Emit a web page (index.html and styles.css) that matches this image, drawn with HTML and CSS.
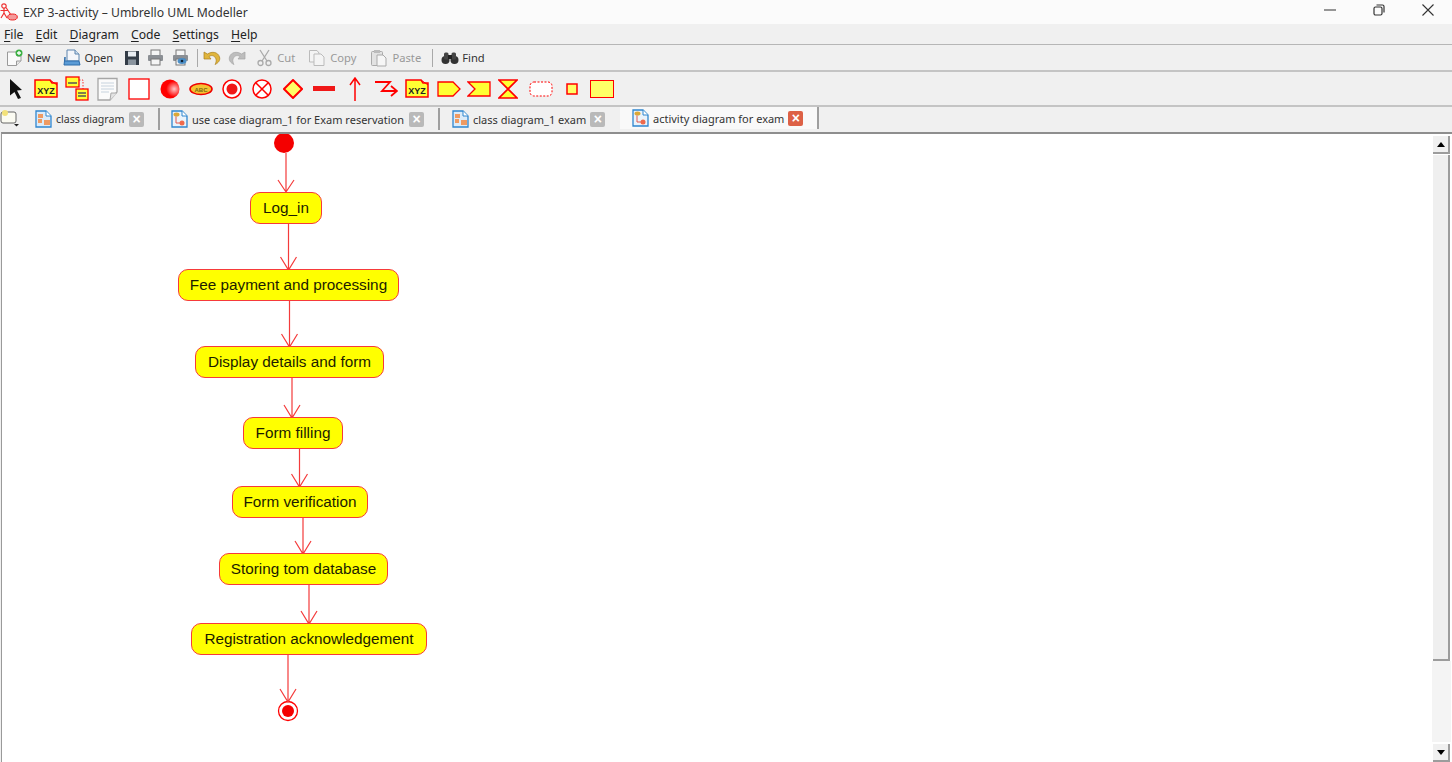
FILE: index.html
```html
<!DOCTYPE html>
<html lang="en">
<head>
<meta charset="utf-8">
<title>EXP 3-activity – Umbrello UML Modeller</title>
<link rel="stylesheet" href="styles.css">
</head>
<body>
<svg width="0" height="0" class="defs">
  <defs>
    <symbol id="doc" viewBox="0 0 17 18">
      <path d="M1 1H11L16 6V17H1Z" fill="#dcebf8" stroke="#2f86cf" stroke-width="1.300"/>
      <path d="M11 1V6H16" fill="#fff" stroke="#2f86cf"/>
      <rect x="3" y="4" width="5" height="4" fill="#ee9a62"/>
      <rect x="3" y="9" width="4" height="4" fill="#ee9a62"/>
      <rect x="9" y="10" width="6" height="5" fill="#ee9a62"/>
    </symbol>
    <symbol id="doc2" viewBox="0 0 17 18">
      <path d="M1 1H11L16 6V17H1Z" fill="#eaf3fb" stroke="#2f86cf" stroke-width="1.300"/>
      <path d="M11 1V6H16" fill="#fff" stroke="#2f86cf"/>
      <ellipse cx="5.500" cy="4.500" rx="3" ry="2" fill="#dba838"/>
      <path d="M5 6.500V13H10" fill="none" stroke="#e0564c" stroke-width="1"/>
      <circle cx="11" cy="13" r="2.500" fill="#ef6a4c"/>
    </symbol>
    <symbol id="xyz" viewBox="0 0 24 20">
      <path d="M1 1H16L18 4H23V18H1Z" fill="#ffff33" stroke="#f00" stroke-width="1.500"/>
      <path d="M16 1L23 6" fill="none" stroke="#f00" stroke-width="1"/>
    </symbol>
  </defs>
</svg>

<header class="titlebar">
  <div class="title-left">
    <svg class="app-icon" width="18" height="18" viewBox="0 0 18 18">
      <circle cx="4" cy="3" r="2.200" fill="none" stroke="#e33" stroke-width="1.200"/>
      <path d="M4 5V10M.5 7.500H8M4 10L1 15M4 10L7 15M6 4.500L11 12" fill="none" stroke="#e33" stroke-width="1.200"/>
      <ellipse cx="12.500" cy="14" rx="4.800" ry="3" fill="#f49a9a" stroke="#e22"/>
    </svg>
    <span>EXP 3-activity – Umbrello UML Modeller</span>
  </div>
  <div class="win-controls">
    <svg width="14" height="14" viewBox="0 0 14 14"><path d="M1 7H13" stroke="#444" stroke-width="1.100"/></svg>
    <svg width="14" height="14" viewBox="0 0 14 14"><rect x="2" y="4" width="8" height="8" rx="1.500" fill="none" stroke="#333" stroke-width="1.200"/><path d="M4.500 2H10.500A1.500 1.500 0 0 1 12 3.500V9.500" fill="none" stroke="#333" stroke-width="1.200"/></svg>
    <svg width="14" height="14" viewBox="0 0 14 14"><path d="M1.500 1.500L12.500 12.500M12.500 1.500L1.500 12.500" stroke="#333" stroke-width="1.100"/></svg>
  </div>
</header>

<nav class="menubar">
  <span><u>F</u>ile</span><span><u>E</u>dit</span><span><u>D</u>iagram</span><span><u>C</u>ode</span><span><u>S</u>ettings</span><span><u>H</u>elp</span>
</nav>

<div class="toolbar main-tools">
  <span class="tool t-new"><svg width="18" height="18" viewBox="0 0 18 18"><path d="M1.500 3H11V7H15V12L10.500 16.500H1.500Z" fill="#fafafa" stroke="#9a9a9a"/><path d="M10.500 16.500V12H15" fill="#e6e6e6" stroke="#9a9a9a"/><circle cx="13" cy="4" r="3.500" fill="#3cb043"/><path d="M11 4H15M13 2V6" stroke="#fff" stroke-width="1.300"/></svg>New</span>
  <span class="tool t-open"><svg width="18" height="18" viewBox="0 0 18 18"><path d="M4 1H12L16 5V12H4Z" fill="#f4f6fa" stroke="#5d84ad"/><path d="M12 1V5H16" fill="#cfdff0" stroke="#5d84ad"/><path d="M2 8V12H16L17 16H1Z" fill="#5a9bd6" stroke="#2c6cab"/></svg>Open</span>
  <span class="tool t-save"><svg width="16" height="16" viewBox="0 0 16 16"><path d="M1 1H15V15H1Z" fill="#333c47"/><rect x="4" y="1.500" width="8" height="5" fill="#e8edf2"/><rect x="4" y="9.500" width="8" height="5.500" fill="#8a949e"/></svg></span>
  <span class="tool t-print"><svg width="17" height="17" viewBox="0 0 17 17"><rect x="4" y="1" width="9" height="6" fill="#f5f5f5" stroke="#777"/><rect x="1" y="6" width="15" height="6" rx="1" fill="#8b8f94"/><rect x="4" y="10" width="9" height="6" fill="#f5f5f5" stroke="#777"/></svg></span>
  <span class="tool t-preview"><svg width="18" height="17" viewBox="0 0 18 17"><rect x="4" y="1" width="9" height="6" fill="#f5f5f5" stroke="#777"/><rect x="1" y="6" width="15" height="6" rx="1" fill="#8b8f94"/><rect x="4" y="10" width="9" height="6" fill="#f5f5f5" stroke="#777"/><ellipse cx="10" cy="12" rx="4.500" ry="3" fill="#4b8ec6"/><circle cx="10" cy="12" r="1.300" fill="#123"/></svg></span>
  <i class="sep"></i>
  <span class="tool t-undo"><svg width="18" height="16" viewBox="0 0 18 16"><path d="M1 2V9H8L6 6.500C9 4.500 12 6 13 9C13.500 11 13 13 12 14.500C15.500 13 17.500 10 16.500 7C15 2 9 1 4.500 4Z" fill="#e0b53c" stroke="#a97f1e" stroke-width=".7"/></svg></span>
  <span class="tool t-redo"><svg width="18" height="16" viewBox="0 0 18 16"><path d="M17 2V9H10L12 6.500C9 4.500 6 6 5 9C4.500 11 5 13 6 14.500C2.500 13 .5 10 1.500 7C3 2 9 1 13.500 4Z" fill="#bdbdbd" stroke="#a5a5a5" stroke-width=".7"/></svg></span>
  <span class="tool off t-cut"><svg width="17" height="18" viewBox="0 0 17 18"><path d="M4 1L11 12M13 1L6 12" stroke="#aaa" stroke-width="1.300"/><circle cx="4.500" cy="14" r="2.500" fill="none" stroke="#aaa" stroke-width="1.300"/><circle cx="12.500" cy="14" r="2.500" fill="none" stroke="#aaa" stroke-width="1.300"/></svg>Cut</span>
  <span class="tool off t-copy"><svg width="18" height="18" viewBox="0 0 18 18"><path d="M1.500 1.500H9L11 4V13H1.500Z" fill="#f4f4f4" stroke="#bbb"/><path d="M6 5H13L16 8V16.500H6Z" fill="#f4f4f4" stroke="#bbb"/></svg>Copy</span>
  <span class="tool off t-paste"><svg width="18" height="18" viewBox="0 0 18 18"><rect x="1.500" y="2.500" width="11" height="14" rx="1" fill="#e2e2e2" stroke="#aaa"/><rect x="4" y="1" width="6" height="3" fill="#bbb"/><path d="M7 6H13L16 9V17H7Z" fill="#f6f6f6" stroke="#aaa"/></svg>Paste</span>
  <i class="sep"></i>
  <span class="tool t-find"><svg width="18" height="14" viewBox="0 0 18 14"><circle cx="4.500" cy="9" r="4" fill="#333"/><circle cx="13.500" cy="9" r="4" fill="#333"/><rect x="3" y="1.500" width="4.500" height="7" rx="1.500" fill="#444"/><rect x="10.500" y="1.500" width="4.500" height="7" rx="1.500" fill="#444"/><rect x="7" y="4" width="4" height="4" fill="#222"/></svg>Find</span>
</div>

<div class="toolbar shape-tools">
  <svg class="m0" width="16" height="22" viewBox="0 0 16 22"><path d="M2 1L14 12L9 12.500L13 20L10 21L6.500 14L2 17.500Z" fill="#111"/></svg>
  <svg class="m10" width="24" height="20" viewBox="0 0 24 20"><use href="#xyz"/><text x="12" y="15" class="xyz">XYZ</text></svg>
  <svg class="m7" width="24" height="25" viewBox="0 0 24 25"><rect x="1" y="1" width="13" height="10" fill="#ffff33" stroke="#f00" stroke-width="1.300"/><rect x="11" y="13" width="12" height="11" fill="#ffff33" stroke="#f00" stroke-width="1.300"/><path d="M14 4H18V13" fill="none" stroke="#f00" stroke-dasharray="1.500 1.500" stroke-width=".8"/><path d="M3 7H12M13 17H21M13 20H21" stroke="#555" stroke-width="1.500"/></svg>
  <svg class="m8" width="21" height="24" viewBox="0 0 21 24"><path d="M1 1.500H20V15L13 23H1Z" fill="#fbfbfb" stroke="#a6a6a6" stroke-width="1.300"/><path d="M4 6H17M4 9H17M4 12H17M4 15H12" stroke="#c7d3de"/><path d="M13 23L14 16H20" fill="#e3e3e3" stroke="#aaa"/></svg>
  <svg class="m10" width="22" height="22" viewBox="0 0 22 22"><rect x="1" y="1" width="20" height="20" fill="#fff" stroke="#f00" stroke-width="1.300"/></svg>
  <svg class="m10" width="20" height="20" viewBox="0 0 20 20"><defs><radialGradient id="rb" cx=".72" cy=".5" r=".7"><stop offset="0" stop-color="#ffc8c8"/><stop offset=".6" stop-color="#f00"/></radialGradient></defs><circle cx="10" cy="10" r="9.500" fill="url(#rb)"/></svg>
  <svg class="m9" width="24" height="14" viewBox="0 0 24 14"><ellipse cx="12" cy="7" rx="11" ry="5.500" fill="#f5c232" stroke="#e00" stroke-width="1.600"/><text x="12" y="9.500" class="abc">ABC</text></svg>
  <svg class="m9" width="20" height="20" viewBox="0 0 20 20"><circle cx="10" cy="10" r="9" fill="#fff" stroke="#f00" stroke-width="1.500"/><circle cx="10" cy="10" r="5.500" fill="#f01818"/></svg>
  <svg class="m10" width="20" height="20" viewBox="0 0 20 20"><circle cx="10" cy="10" r="9" fill="#fff" stroke="#f00" stroke-width="1.500"/><path d="M4 4L16 16M16 4L4 16" stroke="#f00" stroke-width="1.500"/></svg>
  <svg class="m11" width="20" height="20" viewBox="0 0 20 20"><path d="M10 1L19 10L10 19L1 10Z" fill="#ffff66" stroke="#f00" stroke-width="2"/></svg>
  <svg class="m10" width="22" height="8" viewBox="0 0 22 8"><rect x="0" y="1" width="22" height="5" fill="#f01818"/></svg>
  <svg class="m14" width="12" height="24" viewBox="0 0 12 24"><path d="M6 24V2M1 8L6 1L11 8" fill="none" stroke="#f00" stroke-width="1.500"/></svg>
  <svg class="m13" width="24" height="18" viewBox="0 0 24 18"><path d="M1 2H16L8 11H23M17 6L23 11L17 16" fill="none" stroke="#f00" stroke-width="1.800"/></svg>
  <svg class="m7" width="24" height="20" viewBox="0 0 24 20"><use href="#xyz"/><text x="12" y="15" class="xyz">XYZ</text></svg>
  <svg class="m8" width="24" height="16" viewBox="0 0 24 16"><path d="M1 1H16L23 8L16 15H1Z" fill="#ffff33" stroke="#f00" stroke-width="1.300"/></svg>
  <svg class="m6" width="24" height="16" viewBox="0 0 24 16"><path d="M1 1H23V15H1L8 8Z" fill="#ffff33" stroke="#f00" stroke-width="1.300"/></svg>
  <svg class="m7" width="20" height="20" viewBox="0 0 20 20"><path d="M1 1H19L1 19H19Z" fill="#ffff33" stroke="#f00" stroke-width="1.600"/></svg>
  <svg class="m11" width="24" height="16" viewBox="0 0 24 16"><rect x="1" y="1" width="22" height="14" rx="4" fill="#fff" stroke="#f00" stroke-dasharray="2 1.500"/></svg>
  <svg class="m13" width="12" height="12" viewBox="0 0 12 12"><rect x="1" y="1" width="10" height="10" fill="#ffff66" stroke="#f00" stroke-width="1.500"/></svg>
  <svg class="m12" width="24" height="18" viewBox="0 0 24 18"><rect x=".5" y=".5" width="23" height="17" fill="#ffff66" stroke="#f00"/></svg>
</div>

<div class="tabbar">
  <svg class="new-tab" width="20" height="18" viewBox="0 0 20 18"><rect x="1" y="3" width="15" height="11" rx="2" fill="#fbfbf2" stroke="#666"/><circle cx="5" cy="4" r="3" fill="#f3e27a"/><path d="M14 15H19L16.500 17.500Z" fill="#222"/></svg>
  <div class="tab t1"><svg width="17" height="18"><use href="#doc"/></svg><span>class diagram</span><b class="x">×</b></div>
  <div class="tab t2"><svg width="17" height="18"><use href="#doc2"/></svg><span>use case diagram_1 for Exam reservation</span><b class="x">×</b></div>
  <div class="tab t3"><svg width="17" height="18"><use href="#doc"/></svg><span>class diagram_1 exam</span><b class="x">×</b></div>
  <div class="tab t4 active"><svg width="17" height="18"><use href="#doc2"/></svg><span>activity diagram for exam</span><b class="x on">×</b></div>
</div>

<main class="workspace">
  <div class="canvas">
    <svg class="edges" width="1430" height="628" viewBox="2 134 1430 628">
      <circle cx="284" cy="143" r="10" fill="#f40000"/>
      <circle cx="288" cy="711" r="9.500" fill="#fff" stroke="#f00" stroke-width="1.300"/>
      <circle cx="288" cy="711" r="6" fill="#f40000"/>
      <g fill="none" stroke="#f43b3b" stroke-width="1.200">
        <path d="M286 153V192M278 180L286 192L294 180"/>
        <path d="M288.500 224V270M280.500 257L288.500 270L296.500 257"/>
        <path d="M289.500 301V347M281.500 334L289.500 347L297.500 334"/>
        <path d="M292 378V418M284 405L292 418L300 405"/>
        <path d="M299.500 449V487M291.500 474L299.500 487L307.500 474"/>
        <path d="M303 518V554M295 541L303 554L311 541"/>
        <path d="M309 585V624M301 611L309 624L317 611"/>
        <path d="M288 655V702M280 689L288 702L296 689"/>
      </g>
    </svg>
    <div class="node n1">Log_in</div>
    <div class="node n2">Fee payment and processing</div>
    <div class="node n3">Display details and form</div>
    <div class="node n4">Form filling</div>
    <div class="node n5">Form verification</div>
    <div class="node n6">Storing tom database</div>
    <div class="node n7">Registration acknowledgement</div>
  </div>
  <aside class="scrollbar">
    <div class="sb-btn"><i class="up"></i></div>
    <div class="sb-thumb"></div>
    <div class="sb-track"></div>
    <div class="sb-btn"><i class="down"></i></div>
  </aside>
</main>
</body>
</html>
```
FILE: styles.css
```css
html, body { margin: 0; padding: 0; height: 100%; }
body {
  width: 1452px; height: 762px; overflow: hidden;
  background: #f0f0f0; color: #222;
  font-family: "Noto Sans", "Open Sans", sans-serif; font-size: 12px;
  display: flex; flex-direction: column;
}
.defs { position: absolute; }

.titlebar {
  height: 24px; flex: none; background: #fbfbfb;
  display: flex; justify-content: space-between; align-items: center;
}
.title-left { display: flex; align-items: center; gap: 5px; padding-left: 0; font-size: 12.200px; color: #333; }
.win-controls { display: flex; gap: 35px; padding-right: 17px; align-items: center; margin-top: -4px; }

.menubar {
  height: 20px; flex: none; display: flex; gap: 12.100px; padding-left: 4px;
  align-items: center; font-size: 12.200px; color: #222;
  border-bottom: 1px solid #b6b6b6;
}
.menubar u { text-decoration-thickness: 1px; text-underline-offset: 2px; }

.toolbar { display: flex; align-items: center; flex: none; border-bottom: 2px solid #c4c4c4; }
.main-tools { height: 25px; padding-left: 6px; font-size: 11.200px; color: #333; }
.tool { display: inline-flex; align-items: center; gap: 3px; }
.tool.off { color: #999; gap: 4px; }
.sep { width: 1px; height: 18px; background: #a9a9a9; flex: none; }
.t-open { margin-left: 13px; }
.t-save { margin-left: 11px; }
.t-print { margin-left: 7px; }
.t-preview { margin-left: 8px; }
.main-tools .sep:nth-of-type(1) { margin-left: 7px; }
.t-undo { margin-left: 5px; }
.t-redo { margin-left: 7px; }
.t-cut { margin-left: 10px; }
.t-copy { margin-left: 13px; }
.t-paste { margin-left: 14px; }
.main-tools .sep:nth-of-type(2) { margin-left: 11px; }
.t-find { margin-left: 8px; }

.shape-tools { height: 33px; padding-left: 8px; }
.m0 { margin-left: 0; }
.m6 { margin-left: 6px; }
.m7 { margin-left: 7px; }
.m8 { margin-left: 8px; }
.m9 { margin-left: 9px; }
.m10 { margin-left: 10px; }
.m11 { margin-left: 11px; }
.m12 { margin-left: 12px; }
.m13 { margin-left: 13px; }
.m14 { margin-left: 14px; }
.xyz { font: bold 9px "Liberation Sans", sans-serif; text-anchor: middle; fill: #222; }
.abc { font: bold 6px "Liberation Sans", sans-serif; text-anchor: middle; fill: #7a6a10; }

.tabbar {
  height: 25px; flex: none; display: flex; align-items: stretch;
  font-size: 11px; color: #333;
}
.new-tab { margin: 2px 0 0 0; flex: none; }
.tab {
  display: flex; align-items: center; gap: 4px; padding: 0 14px 0 11px; box-sizing: border-box;
  border-right: 2px solid #9f9f9f; margin: 1px 0 2px; white-space: nowrap; flex: none;
}
.tab > svg { flex: none; }
.t1 { margin-left: 2px; width: 138px; padding-left: 13px; font-size: 10.600px; }
.t2 { width: 280px; }
.t3 { width: 180px; padding-left: 12px; padding-right: 16px; border-right-color: transparent; }
.t4 { width: 199px; background: #f9f9f9; margin-top: 0; margin-bottom: 3px; padding-left: 12px; }
.x {
  width: 15px; height: 15px; border-radius: 2px; background: #b9b9b9; color: #fff; margin-left: auto;
  font: bold 14px/15px "Liberation Sans", sans-serif; text-align: center; flex: none;
}
.x.on { background: #dd6146; }

.workspace {
  flex: 1; min-height: 0; display: flex; margin-left: 1px;
  border-top: 2px solid #8e8e8e; border-left: 1px solid #9a9a9a; background: #fff;
}
.canvas { flex: 1; position: relative; background: #fff; overflow: hidden; }
.edges { position: absolute; left: 0; top: 0; }
.node {
  position: absolute; box-sizing: border-box; height: 32px;
  display: flex; align-items: center; justify-content: center;
  background: #ffff00; border: 1.500px solid #f63a3a; border-radius: 10px;
  font-family: "Liberation Sans", Arial, sans-serif; font-size: 15.300px; color: #1c1c00; white-space: nowrap;
}
.n1 { left: 248px; top: 58px; width: 72px; }
.n2 { left: 176px; top: 135px; width: 221px; }
.n3 { left: 193px; top: 212px; width: 189px; }
.n4 { left: 241px; top: 283px; width: 100px; }
.n5 { left: 230px; top: 352px; width: 136px; }
.n6 { left: 217px; top: 419px; width: 169px; }
.n7 { left: 189px; top: 489px; width: 236px; }

.scrollbar { width: 20px; flex: none; display: flex; flex-direction: column; background: #fff; }
.sb-btn {
  height: 16px; flex: none; margin: 2px 2px 0 1px; background: #f0f0f0;
  border-right: 2px solid #9c9c9c; border-bottom: 2px solid #9c9c9c;
  display: flex; align-items: center; justify-content: center;
}
.sb-btn .up { border: 4px solid transparent; border-top: 0; border-bottom: 5px solid #000; }
.sb-btn .down { border: 4px solid transparent; border-bottom: 0; border-top: 5px solid #000; }
.sb-thumb { height: 504px; flex: none; margin: 1px 2px 0 1px; background: #efefef; border-right: 2px solid #9c9c9c; border-bottom: 2px solid #9c9c9c; }
.sb-track { flex: 1; background: #f4f4f4; margin-right: 1px; }
```
